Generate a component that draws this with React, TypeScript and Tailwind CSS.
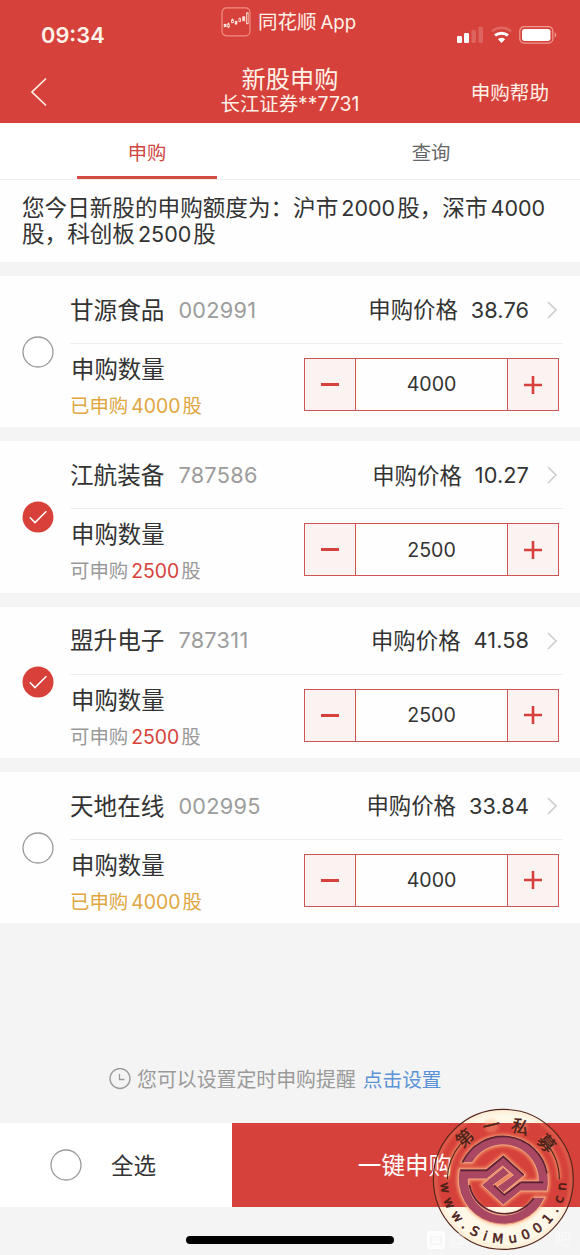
import { useState } from "react";
import type { ReactNode } from "react";
import { clsx } from "clsx";

type Stock = {
  name: string;
  code: string;
  price: string;
  amount: number;
  quota: number;
  applied: boolean;
};

const stocks: Stock[] = [
  { name: "甘源食品", code: "002991", price: "38.76", amount: 4000, quota: 4000, applied: true },
  { name: "江航装备", code: "787586", price: "10.27", amount: 2500, quota: 2500, applied: false },
  { name: "盟升电子", code: "787311", price: "41.58", amount: 2500, quota: 2500, applied: false },
  { name: "天地在线", code: "002995", price: "33.84", amount: 4000, quota: 4000, applied: true },
];

export default function App() {
  const [selected, setSelected] = useState<string[]>(["787586", "787311"]);

  function toggle(code: string) {
    setSelected((current) => (current.includes(code) ? current.filter((item) => item !== code) : [...current, code]));
  }

  const allSelected = selected.length === stocks.length;

  return (
    <div className="relative flex h-[1255px] w-[580px] flex-col overflow-hidden bg-[#f4f4f4] font-['Inter','Noto_Sans_CJK_SC',sans-serif] font-[390] text-[#333]">
      <Header />
      <Tabs />
      <p className="h-[82px] shrink-0 bg-[#fefefe] pt-[15px] pl-[22px] text-[22.6px] leading-[26px] whitespace-nowrap">
        您今日新股的申购额度为：沪市<Num className="text-[21.5px]">2000</Num>股，深市<Num className="text-[21.5px]">4000</Num>
        <br />
        股，科创板<Num className="text-[21.5px]">2500</Num>股
      </p>

      <main className="mt-[14px] flex flex-col gap-[14px]">
        {stocks.map((stock) => (
          <StockCard key={stock.code} stock={stock} checked={selected.includes(stock.code)} onToggle={() => toggle(stock.code)} />
        ))}
      </main>

      <div className="mt-auto flex h-[88px] shrink-0 items-center pl-[109px] text-[19.9px] leading-none whitespace-nowrap text-[#9a9a9a]">
        <svg width="22" height="22" viewBox="0 0 22 22" fill="none" stroke="#999" strokeWidth="1.3">
          <circle cx="11" cy="10.5" r="10" />
          <path d="M10.5 6v5.5h5" />
        </svg>
        <span className="ml-[6px] pt-[3px]">您可以设置定时申购提醒</span>
        <a className="ml-[7px] pt-[3px] text-[19.7px] text-[#5b92d8]">点击设置</a>
      </div>

      <footer className="flex h-[84px] shrink-0">
        <button
          type="button"
          onClick={() => setSelected(allSelected ? [] : stocks.map((stock) => stock.code))}
          className="flex w-[232px] items-center bg-white pl-[50px] text-[22.5px]"
        >
          <CheckCircle checked={allSelected} />
          <span className="ml-[29px] pt-[2px]">全选</span>
        </button>
        <button type="button" className="flex-1 bg-[#d6423b] pt-[2px] pr-[2px] text-[23.6px] text-white">
          一键申购
        </button>
      </footer>

      <div className="flex h-12 shrink-0 justify-center pt-[29px]">
        <div className="h-[7.5px] w-[208px] rounded-full bg-black" />
      </div>

      <Seal />
      <ForumMark />
    </div>
  );
}

function Header() {
  return (
    <header className="flex h-[123px] shrink-0 flex-col bg-[#d6423b] text-[#fff1e8]">
      <div className="flex h-[58px]">
        <div className="w-[221px] pt-[21px] pl-[41px] text-[21.8px] leading-[28px] font-semibold">09:34</div>
        <div className="flex w-[236px] items-start pt-[7px]">
          <AppLogo />
          <span className="ml-[7px] pt-px text-[19.5px] leading-[29px] whitespace-nowrap">
            同花顺<span className="ml-[4px] text-[18.6px]">App</span>
          </span>
        </div>
        <div className="flex items-start pt-[26px]">
          <StatusIcons />
        </div>
      </div>
      <div className="flex h-[65px]">
        <div className="w-[200px] pt-[19px] pl-[30px]">
          <svg width="18" height="30" viewBox="0 0 18 30" fill="none" stroke="currentColor" strokeWidth="1.7">
            <path d="M16 1.5 2 15l14 13.5" />
          </svg>
        </div>
        <div className="flex w-[180px] flex-col items-center pt-[8px] whitespace-nowrap">
          <h1 className="text-[24.2px] leading-[27px]">新股申购</h1>
          <p className="text-[19.4px] leading-[23px]">长江证券**7731</p>
        </div>
        <div className="flex-1 pt-[22px] pr-[31px] text-right text-[19.6px] leading-[27px]">申购帮助</div>
      </div>
    </header>
  );
}

function AppLogo() {
  return (
    <svg width="30" height="30" viewBox="0 0 30 30" fill="none">
      <rect x="1" y="0.8" width="28" height="28" rx="4.5" stroke="#f08f84" strokeWidth="1.2" />
      <g stroke="#ffe9df" strokeWidth="0.8">
        <rect x="3.2" y="17.3" width="1.9" height="2.4" fill="#ffe9df" />
        <rect x="6.7" y="16.8" width="1.6" height="3.2" />
        <path d="M7.5 15.5v1.3M7.5 20v1.2M11.5 11.5v1.2M15 14v3.8M18.7 10.5v1" />
        <rect x="10.6" y="12.7" width="1.7" height="3" />
        <rect x="14.2" y="14.3" width="1.7" height="2.6" fill="#ffe9df" />
        <rect x="17.9" y="11.7" width="1.7" height="2.8" />
        <rect x="21.8" y="9.8" width="1.9" height="4" fill="#ffe9df" />
        <rect x="25.6" y="5.8" width="1.5" height="11" />
      </g>
    </svg>
  );
}

function StatusIcons() {
  return (
    <svg width="100" height="19" viewBox="0 0 100 19" fill="none">
      <g fill="#fff">
        <rect y="10" width="5" height="7" rx="1.2" />
        <rect x="7" y="7" width="5" height="10" rx="1.2" />
        <rect x="14.5" y="4" width="4.5" height="13" rx="1.2" opacity="0.18" />
        <rect x="21.5" y="0.7" width="4.5" height="16.3" rx="1.2" opacity="0.18" />
      </g>
      <path d="M35 5.3c5.5-4.7 13.5-4.7 19 0" stroke="#fff" strokeWidth="2.4" opacity="0.2" />
      <path d="M38 9.4c3.8-3 9.2-3 13 0" stroke="#fff" strokeWidth="3" />
      <path d="m44.5 17-3.6-3.8c2.1-1.8 5.1-1.8 7.2 0z" fill="#fff" />
      <rect x="62.8" y="0.7" width="33" height="16.4" rx="4.4" stroke="#ee9c91" strokeWidth="1.2" />
      <rect x="65" y="2.9" width="28.5" height="12" rx="2.6" fill="#fff" />
      <path d="M97.7 6.3c2 .8 2 4.4 0 5.2z" fill="#ee9c91" />
    </svg>
  );
}

function Tabs() {
  return (
    <nav className="flex h-[57px] shrink-0 border-b border-[#efefef] bg-white pr-[7px] pl-[5px] text-[19.3px] leading-none">
      <div className="flex flex-1 flex-col items-center text-[#d0463f]">
        <span className="flex h-[53px] items-center pt-[8px]">申购</span>
        <span className="h-[3px] w-[140px] shrink-0 bg-[#d34d46]" />
      </div>
      <div className="flex flex-1 flex-col items-center text-[#666]">
        <span className="flex h-[53px] items-center pt-[8px]">查询</span>
      </div>
    </nav>
  );
}

function StockCard({ stock, checked, onToggle }: { stock: Stock; checked: boolean; onToggle: () => void }) {
  return (
    <section className="flex h-[151.3px] shrink-0 bg-[#fefefe]">
      <button type="button" onClick={onToggle} className="flex w-[70px] items-center pl-[22px]">
        <CheckCircle checked={checked} />
      </button>
      <div className="mr-[17px] flex flex-1 flex-col">
        <div className="flex h-[68px] items-center border-b border-[#eee] pt-[2px] leading-none whitespace-nowrap">
          <span className="text-[23.6px]">{stock.name}</span>
          <span className="ml-[14px] text-[21.7px] tracking-[0.3px] text-[#9c9c9c]">{stock.code}</span>
          <span className="ml-auto text-[22.4px]">申购价格</span>
          <span className="ml-[13px] text-[21.7px] tracking-[0.1px]">{stock.price}</span>
          <svg className="mr-[5px] mb-px ml-[17px]" width="12" height="18" viewBox="0 0 12 18" fill="none" stroke="#ccc" strokeWidth="1.6">
            <path d="m2 1 8 8-8 8" />
          </svg>
        </div>
        <div className="flex flex-1 justify-between pr-1">
          <div className="flex flex-col pl-px whitespace-nowrap">
            <span className="mt-[11px] text-[23.4px] leading-[30px]">申购数量</span>
            <span className={clsx("mt-[8px] -ml-px text-[19.4px] leading-[26px]", stock.applied ? "text-[#e0a63f]" : "text-[#999]")}>
              {stock.applied ? "已申购" : "可申购"}
              <Num className={stock.applied ? "" : "text-[#d6423b]"}>{stock.quota}</Num>股
            </span>
          </div>
          <Stepper value={stock.amount} />
        </div>
      </div>
    </section>
  );
}

function Stepper({ value }: { value: number }) {
  return (
    <div className="mt-[14px] flex h-[53px] w-[255px] border-[1.5px] border-[#cd5552] text-[#d6423b]">
      <button type="button" className="flex w-[51px] items-center justify-center border-r border-[#cd5552] bg-[#fbf2f2]">
        <span className="h-[3px] w-[18px] bg-current" />
      </button>
      <span className="flex flex-1 items-center justify-center pt-px text-[19.6px] leading-none text-[#333]">{value}</span>
      <button type="button" className="flex w-[51px] items-center justify-center border-l border-[#cd5552] bg-[#fbf2f2]">
        <svg width="18" height="18" viewBox="0 0 18 18" stroke="currentColor" strokeWidth="2.6">
          <path d="M9 0v18M0 9h18" />
        </svg>
      </button>
    </div>
  );
}

function CheckCircle({ checked }: { checked: boolean }) {
  return (
    <svg width="32" height="32" viewBox="0 0 32 32" fill="none">
      {checked ? (
        <>
          <circle cx="16" cy="16" r="15.5" fill="#d8403a" />
          <path d="m7.8 16.3 5.2 5.3 11.4-11.4" stroke="#fff" strokeWidth="1.5" />
        </>
      ) : (
        <circle cx="16" cy="16" r="15" fill="#fff" stroke="#999" strokeWidth="1.3" />
      )}
    </svg>
  );
}

function Num({ children, className }: { children: ReactNode; className?: string }) {
  return <span className={clsx("mr-[2px] ml-[3px]", className)}>{children}</span>;
}

// Faint forum signature along the bottom edge
function ForumMark() {
  return (
    <div className="absolute bottom-0 left-[427px] flex h-[30px] w-[150px] items-center text-[17px] text-white/50">
      <svg width="18" height="18" viewBox="0 0 18 18">
        <rect width="18" height="18" rx="3" fill="#fff" opacity="0.8" />
        <path d="M4 6h10v7H4zM6 9h2M10 9h2" fill="none" stroke="#f1f1f1" strokeWidth="1.2" />
      </svg>
      <span className="ml-1">@</span>
      <span className="mr-[6px] ml-auto">吧</span>
    </div>
  );
}

const sealBand =
  "M133 222A136 136 0 0 0 390 307L358 307A106 106 0 0 1 160 252L215 252L263 213L295 240L246 275L265 293L330 240L265 180L213 222Z";

const sealChars = [
  { char: "第", x: 150, y: 130, angle: -42 },
  { char: "一", x: 229, y: 92, angle: -13 },
  { char: "私", x: 316, y: 96, angle: 16 },
  { char: "募", x: 394, y: 145, angle: 48 },
];

function Seal() {
  return (
    <svg className="absolute top-[1095px] left-[415px]" width="165" height="160" viewBox="0 0 495 480">
      <defs>
        <filter id="glow" x="-20%" y="-20%" width="140%" height="140%">
          <feGaussianBlur stdDeviation="5" />
        </filter>
        <clipPath id="offBar">
          <path d="M0 0H495V84H0zM0 336H495V480H0z" />
        </clipPath>
        <path id="sealArc" d="M76 256A189 189 0 0 0 454 256" />
      </defs>
      <circle cx="265" cy="253" r="210" fill="#fdf8e8" clipPath="url(#offBar)" />
      <circle cx="265" cy="253" r="203" fill="none" stroke="#ffc58e" strokeWidth="7" opacity="0.3" filter="url(#glow)" />
      <circle cx="265" cy="253" r="210" fill="none" stroke="#54251c" strokeWidth="3.5" />
      <path d="M97 253A168 168 0 0 1 138 146M392 143A168 168 0 0 1 433 253" fill="none" stroke="#ffb27a" strokeWidth="12" opacity="0.55" filter="url(#glow)" />
      <path d="M97 253A168 168 0 0 1 138 146M392 143A168 168 0 0 1 433 253" fill="none" stroke="#54251c" strokeWidth="3.5" />
      <g stroke="#ffb27a" strokeWidth="10" fill="none" opacity="0.7" filter="url(#glow)">
        <path d={sealBand} />
        <path d={sealBand} transform="rotate(180 265 255)" />
      </g>
      <g fill="#aa4864" stroke="#f3a980" strokeWidth="3">
        <path d={sealBand} />
        <path d={sealBand} transform="rotate(180 265 255)" />
      </g>
      <g fill="none" stroke="#5c2233" strokeWidth="5">
        <path d="M136 226H215L265 185L326 240M317 263L268 300L237 271M318 262H385" />
        <path d="M142 203A134 134 0 0 1 396 235M163 270A107 107 0 0 0 356 310" />
      </g>
      <g fontFamily="'Noto Sans CJK SC', sans-serif" fontSize="52" textAnchor="middle">
        {sealChars.map(({ char, x, y, angle }) => (
          <g key={char} transform={`translate(${x} ${y}) rotate(${angle})`}>
            <circle r="22" fill="#ffb27a" opacity="0.35" filter="url(#glow)" />
            <text y="18" fill="#4a2019" stroke="#4a2019" strokeWidth="1.2">
              {char}
            </text>
          </g>
        ))}
      </g>
      <text fontFamily="'DejaVu Sans', sans-serif" fontSize="39" fill="#4a2019" stroke="#4a2019" strokeWidth="1.6">
        <textPath href="#sealArc" startOffset="8" textLength="578">
          www.SiMu001.cn
        </textPath>
      </text>
    </svg>
  );
}
